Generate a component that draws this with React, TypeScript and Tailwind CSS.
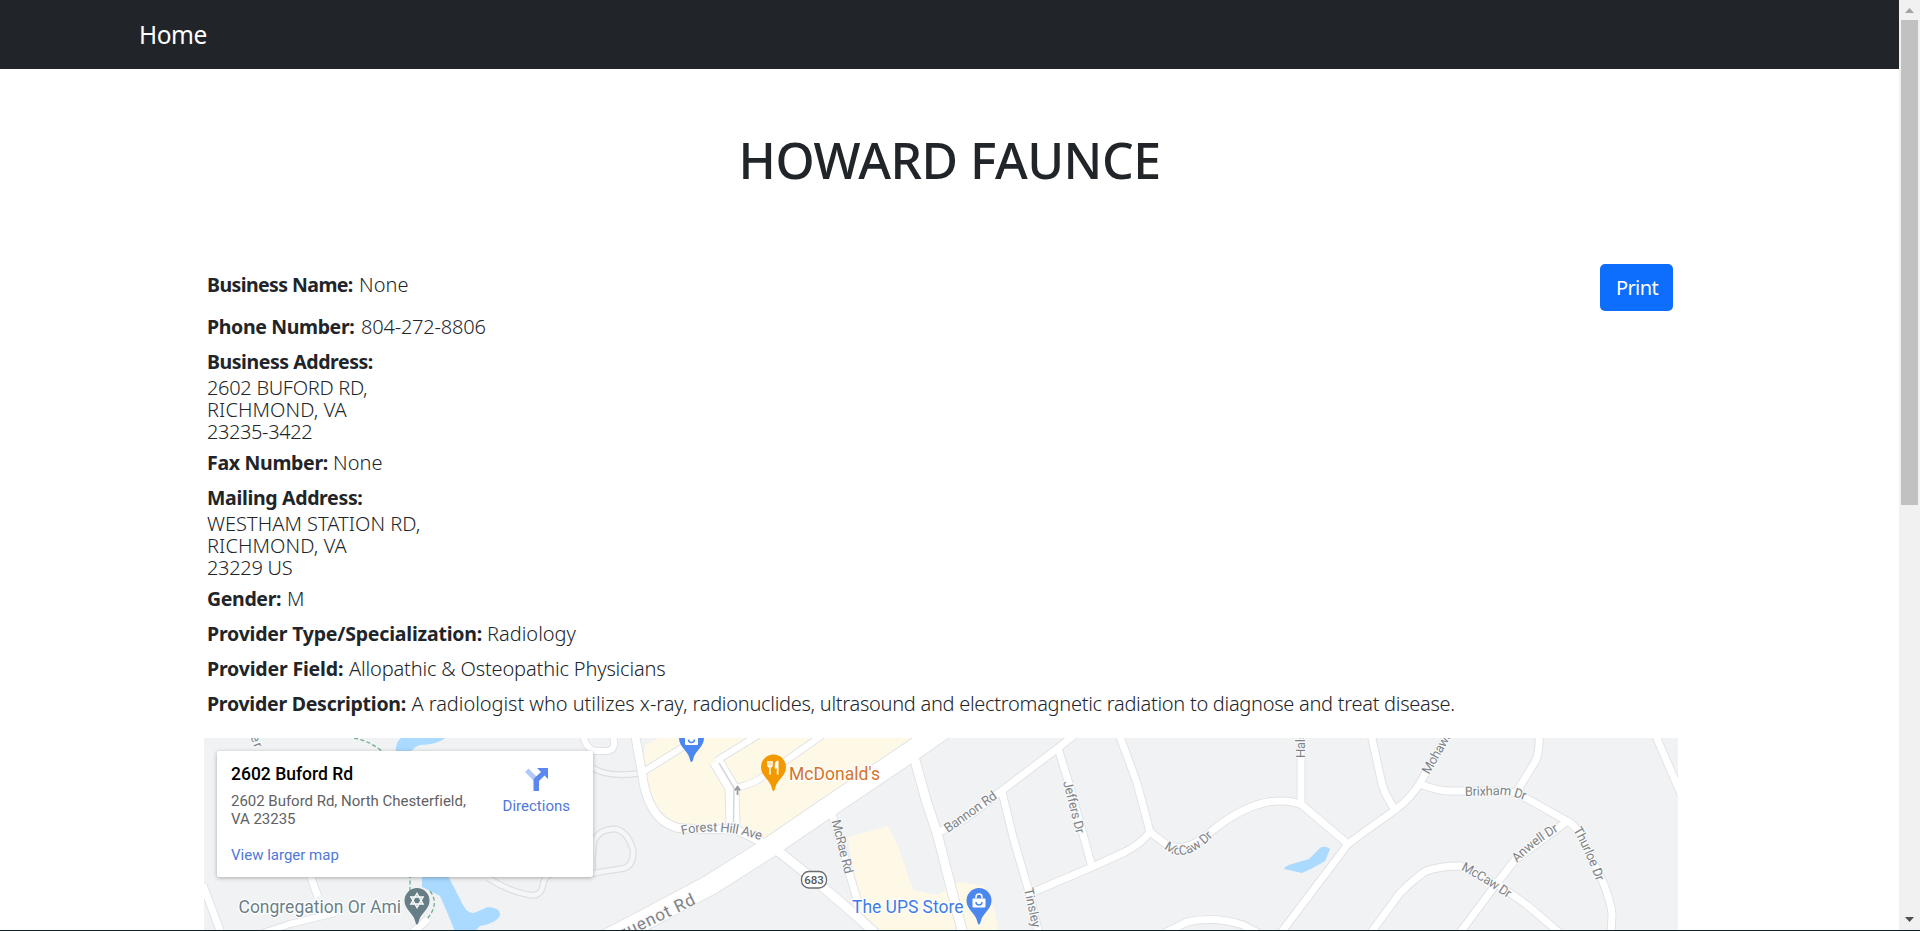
import type { ReactNode } from "react";

type Road = { d: string; w: number };

const roads: Road[] = [
  { d: "M203 885 L221 933", w: 7 },
  { d: "M309 872 L318 897", w: 7 },
  { d: "M263 933 L290 924 L335 913", w: 6 },
  { d: "M428 919 L411 934", w: 7 },
  { d: "M583 734 Q586 750 596 751 L607 751 Q615 750 614 742 L613 734", w: 6 },
  { d: "M635 734 L642 773 Q645 796 652 807 Q660 823 678 828 Q706 830 735 829 L768 845", w: 8 },
  { d: "M643 772 L683 747 L702 734", w: 6 },
  { d: "M716 761 L732 788 L733 826", w: 13 },
  { d: "M716 761 L760 734", w: 6 },
  { d: "M738 787 Q752 785 764 776 L824 734", w: 6 },
  { d: "M778 851 L817 882 L860 919 L876 934", w: 9 },
  { d: "M831 811 L857 899", w: 7 },
  { d: "M567 960 L637 924 L710 885 L770 847 L833 804 L928 740 L967 712", w: 20 },
  { d: "M915 760 L926 800 L937 833 L963 934", w: 9 },
  { d: "M937 833 L965 819 L1000 792 L1058 748 L1077 733", w: 7 },
  { d: "M1002 792 L1013 837 L1029 892 L1039 934", w: 7 },
  { d: "M1058 748 L1070 787 L1092 867", w: 7 },
  { d: "M1031 893 L1092 867 L1125 852 Q1142 843 1150 832", w: 7 },
  { d: "M1119 734 L1137 783 L1150 832", w: 7 },
  { d: "M1150 832 L1167 845 Q1187 854 1213 830 Q1240 808 1267 802 Q1290 799 1302 805 L1348 844", w: 7 },
  { d: "M1301 733 L1301 805", w: 7 },
  { d: "M1280 934 L1348 844 L1367 830 L1395 810 Q1411 798 1420 783 L1448 734", w: 7 },
  { d: "M1371 734 L1382 784 Q1385 795 1395 810", w: 7 },
  { d: "M1420 784 Q1440 792 1455 791 L1500 791 Q1513 791 1524 797 L1567 821 Q1577 826 1583 840 L1603 882 Q1612 906 1612 915 L1611 934", w: 7 },
  { d: "M1539 734 Q1540 752 1535 762 L1517 791", w: 7 },
  { d: "M1567 821 L1553 832 L1515 860 L1497 883 L1459 934", w: 7 },
  { d: "M1370 934 L1400 893 Q1415 878 1426 871 Q1440 866 1460 866 L1497 884 L1527 905 L1561 934", w: 7 },
  { d: "M1655 734 L1681 794", w: 7 },
  { d: "M1165 933 L1187 922 Q1215 916 1243 925 L1260 934", w: 7 },
  { d: "M1216 732 L1216 737", w: 6 },
];

const lanes = [
  "M593 768 Q608 778 642 773",
  "M588 874 Q594 870 592 862 L594 842 Q598 829 616 829 Q628 832 633 850 Q634 868 620 869 L600 872 Q588 876 575 871 Q545 868 543 885 Q541 897 530 895 Q510 892 488 878",
];

type RoadLabel = { id: string; d: string; text: string; len?: number; size?: number };

const roadLabels: RoadLabel[] = [
  { id: "forest", d: "M682 835 Q722 825 768 843", text: "Forest Hill Ave", len: 80 },
  { id: "mcrae", d: "M831.5 821 L848 887", text: "McRae Rd", len: 55 },
  { id: "bannon", d: "M948 833 L1006 792", text: "Bannon Rd", len: 61 },
  { id: "jeffers", d: "M1063 782 L1080 848", text: "Jeffers Dr", len: 54 },
  { id: "tinsley", d: "M1024 889 L1036 945", text: "Tinsley", len: 40 },
  { id: "mccaw-west", d: "M1164 848 Q1185 868 1219 830", text: "McCaw Dr", len: 57 },
  { id: "hals", d: "M1305 758 L1305 700", text: "Halsey", len: 38 },
  { id: "mohawk", d: "M1429 775 L1465 712", text: "Mohawk", len: 47 },
  { id: "brixham", d: "M1465 796 L1505 795 Q1515 796 1532 803", text: "Brixham Dr", len: 61 },
  { id: "anwell", d: "M1517 863 Q1536 843 1564 828", text: "Anwell Dr", len: 53 },
  { id: "thurloe", d: "M1573 830 Q1586 852 1600 891", text: "Thurloe Dr", len: 57 },
  { id: "mccaw-east", d: "M1461 870 Q1480 879 1515 903", text: "McCaw Dr", len: 55 },
  { id: "huguenot", d: "M600 950 L704 900", text: "Huguenot Rd", size: 17, len: 107 },
  { id: "rer", d: "M248 732 L261 763", text: "rer", len: 18 },
];

function Pin({ x, y, color, children }: { x: number; y: number; color: string; children: ReactNode }) {
  return (
    <g transform={`translate(${x} ${y})`}>
      <path d="M0 24 C-1 24 -1.5 22 -2 20 C-4 12.500 -12.500 9 -12.500 0 A12.500 12.500 0 0 1 12.500 0 C12.500 9 4 12.500 2 20 C1.500 22 1 24 0 24Z" fill={color} />
      {children}
    </g>
  );
}

function Bag() {
  return (
    <>
      <path d="M-3 -2 V-3.500 A3 3 0 0 1 3 -3.500 V-2" fill="none" stroke="#fff" strokeWidth="1.500" />
      <rect x="-6.500" y="-2" width="13" height="9" rx="1" fill="#fff" />
      <path d="M-3 1.500 A3 3 0 0 0 3 1.500" fill="none" stroke="#4b87ee" strokeWidth="1.500" />
    </>
  );
}

function MapCanvas() {
  return (
    <svg className="block h-[192px] w-[1474px] font-[Roboto,sans-serif]" viewBox="204 738 1474 192">
      <rect x="204" y="738" width="1474" height="192" fill="#f1f2f4" />
      <g fill="#fef8e7">
        <path d="M645 745 L668 734 L930 734 L770 842 L735 829 L680 828 L655 810 L643 778Z" />
        <path d="M848 837 L888 826 L898 846 L913 890 L937 895 L958 882 L984 886 L994 908 L999 934 L872 934 L850 910 L857 897Z" />
      </g>
      <g fill="#aadaff">
        <path d="M396 754 Q394 736 412 734 L450 734 Q440 745 420 745 Q411 748 409 756Z" />
        <path d="M422 874 L447 874 L460 899 Q466 914 474 913 L488 907 Q501 908 500 915 Q497 923 480 926 L472 934 L456 934 L447 912 L440 896 L422 887Z" />
        <path d="M1284 869 Q1285 866 1292 864 L1309 859 L1320 848 Q1325 845 1330 849 L1325 861 Q1314 868 1302 873Z" />
      </g>
      <g fill="none" stroke="#71ae8c" strokeWidth="1.300" strokeDasharray="4 2.500">
        <path d="M354 738 Q370 741 383 752" />
        <path d="M410 874 L410 895" />
        <path d="M430 891 Q440 904 427 919" />
      </g>
      <g fill="none" strokeLinejoin="round">
        {lanes.map((d) => (
          <g key={d}>
            <path d={d} stroke="#dddfe2" strokeWidth="7" />
            <path d={d} stroke="#f5f6f7" strokeWidth="4.500" />
          </g>
        ))}
        {roads.map((r) => (
          <path key={r.d} d={r.d} stroke="#dfe1e5" strokeWidth={r.w + 1.8} />
        ))}
        {roads.map((r) => (
          <path key={r.d} d={r.d} stroke="#fff" strokeWidth={r.w} />
        ))}
        <path d="M719 763 L734 788 L733.500 823" stroke="#d3d7de" strokeWidth="1.500" />
        <path d="M737.500 795 V788 M735 790.500 L737.500 786.500 L740 790.500" stroke="#9a9ea4" strokeWidth="1.800" />
      </g>
      <g fill="#7f8387" stroke="#f8f9fa" strokeWidth="2.500" strokeLinejoin="round" paintOrder="stroke">
        {roadLabels.map((l) => (
          <g key={l.id}>
            <path id={l.id} d={l.d} fill="none" stroke="none" />
            <text fontSize={l.size ?? 13} textLength={l.len}>
              <textPath href={`#${l.id}`} textLength={l.len}>{l.text}</textPath>
            </text>
          </g>
        ))}
      </g>
      <rect x="801.500" y="871.500" width="25" height="16.500" rx="7.500" fill="#fff" stroke="#6a6e72" strokeWidth="1.300" />
      <text x="814" y="884" fontSize="11.500" fontWeight="500" textAnchor="middle" fill="#55595d">683</text>

      <Pin x={691.5} y={738} color="#4b87ee"><Bag /></Pin>
      <Pin x={979} y={900.5} color="#4b87ee"><Bag /></Pin>
      <Pin x={773.5} y={767} color="#f29900">
        <path d="M-5.500 -6 V-2 Q-5.500 0 -3.500 0 Q-1.500 0 -1.500 -2 V-6 M-3.500 -6 V7.500" fill="none" stroke="#fff" strokeWidth="1.500" />
        <path d="M5 -6.500 V7.500 H3.300 V1.500 H1.300 V-2.500 Q1.500 -6 5 -6.500Z" fill="#fff" />
      </Pin>
      <Pin x={417} y={900.5} color="#687e86">
        <path d="M0 -7 L6 3.500 H-6Z M0 7 L-6 -3.500 H6Z" fill="none" stroke="#fff" strokeWidth="1.500" />
      </Pin>

      <g fontSize="17.500" stroke="#fff" strokeWidth="2.500" strokeLinejoin="round" paintOrder="stroke">
        <text x="238.500" y="912.500" textLength="162.500" fill="#6b7f88">Congregation Or Ami</text>
        <text x="789" y="779.500" textLength="91" fill="#d5742c">McDonald's</text>
        <text x="852" y="913" textLength="111.500" fill="#3f7de6">The UPS Store</text>
      </g>
    </svg>
  );
}

function DirectionsIcon() {
  return (
    <svg className="h-[23px] w-[23px]" viewBox="0 0 23 23">
      <path d="M0 4 L3.500 .5 L12 9 L9 13Z" fill="#b4c8f7" />
      <path d="M12 0 H23 V11 L19.500 7.500 L14 13 V23 H8.500 V12.500 Q8.500 11 9.500 10 L16 4Z" fill="#5b87ee" />
    </svg>
  );
}

function PlaceCard() {
  return (
    <div className="absolute top-[13px] left-[13px] flex h-[126px] w-[376px] justify-between rounded-[2px] bg-white pt-[13px] pr-[23px] pl-[14px] font-[Roboto,sans-serif] text-[15px] text-[#5f6164] shadow-[0_1px_4px_rgba(0,0,0,0.3)]">
      <div className="whitespace-nowrap">
        <div className="text-[17.500px] leading-[20px] font-medium text-black">2602 Buford Rd</div>
        <div className="mt-[8px] leading-[18px] tracking-[-0.02px]">
          2602 Buford Rd, North Chesterfield,
          <br />
          VA 23235
        </div>
        <a className="mt-[18px] block leading-[18px] text-[#4f78d8]">View larger map</a>
      </div>
      <a className="flex flex-col items-center pt-[4px] text-[#4f78d8]">
        <DirectionsIcon />
        <span className="mt-[6px] leading-[18px]">Directions</span>
      </a>
    </div>
  );
}

function Scrollbar() {
  return (
    <div className="flex w-[21px] shrink-0 flex-col items-center justify-between bg-[#f1f1f1]">
      <div className="flex flex-col items-center">
        <svg className="h-[20px] w-[17px]" viewBox="0 0 17 20">
          <path d="M4 13 L8.500 8 L13 13Z" fill="#a3a3a3" />
        </svg>
        <div className="h-[485px] w-[17px] bg-[#c1c1c1]" />
      </div>
      <svg className="h-[20px] w-[17px]" viewBox="0 0 17 20">
        <path d="M4 7 L8.500 12 L13 7Z" fill="#505050" />
      </svg>
    </div>
  );
}

function Label({ className, children }: { className: string; children: ReactNode }) {
  return <span className={`inline-block text-[19.500px] font-bold ${className}`}>{children}</span>;
}

export default function App() {
  return (
    <div className="flex h-[931px] flex-col overflow-hidden bg-white font-['Noto_Sans','Open_Sans',sans-serif] text-[#212529]">
      <div className="flex min-h-0 flex-1">
        <div className="flex min-w-0 flex-1 flex-col">
          <nav className="flex h-[69px] shrink-0 items-center bg-[#212529] pt-px pl-[139px]">
            <a className="text-[24.500px] leading-[36px] tracking-[-0.5px] text-white">Home</a>
          </nav>
          <h1 className="mt-[61px] text-center text-[50px] leading-[60px] font-medium tracking-[-0.5px]">HOWARD FAUNCE</h1>
          <main className="flex h-[548px] shrink-0 items-start justify-between pt-[74px] pr-[226px] pl-[207px]">
            <div className="pt-[10px] text-[20px] leading-[22px] font-light whitespace-nowrap">
              <p className="mb-[20px] h-[22px]">
                <Label className="w-[152px] tracking-[-0.58px]">Business Name:</Label>
                <span className="tracking-[0.05px]">None</span>
              </p>
              <p className="mb-[13px] h-[22px]">
                <Label className="w-[154px] tracking-[-0.36px]">Phone Number:</Label>
                <span className="tracking-[-0.2px]">804-272-8806</span>
              </p>
              <p className="mb-[4px] h-[22px]">
                <Label className="tracking-[-0.44px]">Business Address:</Label>
              </p>
              <address className="mb-[9px] not-italic">
                <div className="tracking-[-0.3px]">2602 BUFORD RD,</div>
                <div className="tracking-[0.1px]">RICHMOND, VA</div>
                <div className="tracking-[-0.4px]">23235-3422</div>
              </address>
              <p className="mb-[13px] h-[22px]">
                <Label className="w-[126px] tracking-[-0.31px]">Fax Number:</Label>
                <span className="tracking-[0.05px]">None</span>
              </p>
              <p className="mb-[4px] h-[22px]">
                <Label className="tracking-[-0.33px]">Mailing Address:</Label>
              </p>
              <address className="mb-[9px] not-italic">
                <div className="tracking-[0.030px]">WESTHAM STATION RD,</div>
                <div className="tracking-[0.1px]">RICHMOND, VA</div>
                <div className="tracking-[-0.3px]">23229 US</div>
              </address>
              <p className="mb-[13px] h-[22px]">
                <Label className="w-[80px] tracking-[-0.35px]">Gender:</Label>M
              </p>
              <p className="mb-[13px] h-[22px]">
                <Label className="w-[280px] tracking-[-0.2px]">Provider Type/Specialization:</Label>Radiology
              </p>
              <p className="mb-[13px] h-[22px]">
                <Label className="w-[142px] tracking-[-0.17px]">Provider Field:</Label>
                <span className="tracking-[-0.16px]">Allopathic &amp; Osteopathic Physicians</span>
              </p>
              <p className="h-[22px]">
                <Label className="w-[204.500px] tracking-[-0.25px]">Provider Description:</Label>
                <span className="tracking-[-0.05px]">A radiologist who utilizes x-ray, </span>
                <span className="tracking-[-0.28px]">
                  radionuclides, ultrasound and electromagnetic radiation to diagnose and treat disease.
                </span>
              </p>
            </div>
            <button className="h-[47px] w-[73px] shrink-0 rounded-[5px] bg-[#0d6efd] pl-px text-[20px] leading-[30px] tracking-[-0.6px] text-white">Print</button>
          </main>
          <section className="relative ml-[204px] w-[1474px]">
            <MapCanvas />
            <PlaceCard />
          </section>
        </div>
        <Scrollbar />
      </div>
      <div className="h-px shrink-0 bg-[#0c2028]" />
    </div>
  );
}
